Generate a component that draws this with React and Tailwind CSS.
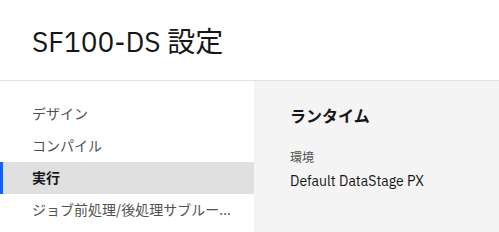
import React from 'react';

const font = { fontFamily: '"IBM Plex Sans", "Noto Sans", "Noto Sans CJK JP", sans-serif' };

const navItems = ['デザイン', 'コンパイル', '実行', 'ジョブ前処理/後処理サブルー...'];

const App = () => {
  const active = 2;
  return (
    <div className="w-[499px] h-[232px] bg-white flex flex-col overflow-hidden text-[#161616]" style={font}>
      <div className="h-[81px] shrink-0 border-b border-[#e0e0e0] px-8 flex items-center">
        <h1 className="text-[28px] leading-none font-normal mt-[3px]">SF100-DS 設定</h1>
      </div>
      <div className="flex flex-1">
        <div className="w-[254px] shrink-0 pt-[17px]">
          {navItems.map((item, i) => (
            <div
              key={item}
              className={`h-8 flex items-center pl-[29px] text-[14px] border-l-[3px] ${
                i === active ? 'bg-[#e0e0e0] border-[#0f62fe] font-semibold text-[#161616]' : 'border-transparent text-[#525252]'
              }`}
            >
              {item}
            </div>
          ))}
        </div>
        <div className="flex-1 bg-[#f4f4f4] pl-9 pt-[25px]">
          <h2 className="text-[16px] font-semibold leading-5">ランタイム</h2>
          <div className="mt-6 text-[12px] leading-4 text-[#525252]">環境</div>
          <div className="mt-[6px] text-[14px] leading-[18px]">Default DataStage PX</div>
        </div>
      </div>
    </div>
  );
};

export default App;
